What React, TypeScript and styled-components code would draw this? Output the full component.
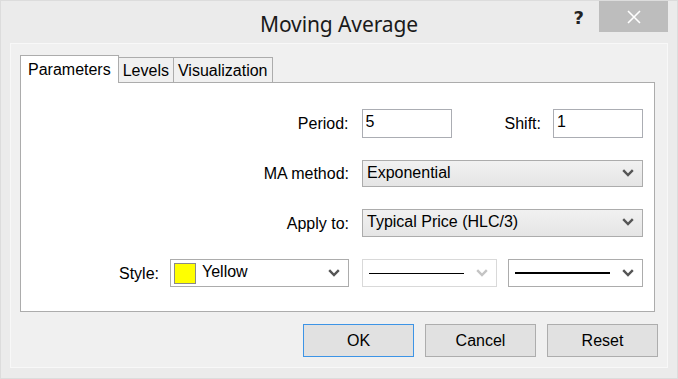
import styled, { createGlobalStyle } from "styled-components";

const GlobalStyle = createGlobalStyle`
  html, body {
    margin: 0;
    padding: 0;
    background: #ebebeb;
  }
  * {
    box-sizing: border-box;
  }
`;

const Chevron = ({ color = "#555" }: { color?: string }) => (
  <svg width="12" height="8" viewBox="0 0 12 8">
    <path d="M1.2 1.2 L6 6 L10.8 1.2" fill="none" stroke={color} strokeWidth="2.4" />
  </svg>
);

const App: React.FC = () => {
  return (
    <>
      <GlobalStyle />
      <Window>
        <TitleBar>
          <span />
          <Title>Moving Average</Title>
          <Controls>
            <Help>?</Help>
            <Close>
              <svg width="14" height="14" viewBox="0 0 14 14">
                <path d="M1 1 L13 13 M13 1 L1 13" stroke="#fff" strokeWidth="1.6" />
              </svg>
            </Close>
          </Controls>
        </TitleBar>
        <Client>
          <TabStrip>
            <Tab $active>Parameters</Tab>
            <Tab>Levels</Tab>
            <Tab>Visualization</Tab>
          </TabStrip>
          <Panel>
            <Rows>
              <Row $h={29}>
                <Label $gap={13}>Period:</Label>
                <Field $w={90} readOnly value="5" />
                <Label $gap={12} $left={53}>Shift:</Label>
                <Field $w={90} readOnly value="1" />
              </Row>
              <Row $h={27}>
                <Label $gap={13}>MA method:</Label>
                <Select $w={281}>
                  <span>Exponential</span>
                  <Chevron />
                </Select>
              </Row>
              <Row $h={28}>
                <Label $gap={13}>Apply to:</Label>
                <Select $w={281}>
                  <span>Typical Price (HLC/3)</span>
                  <Chevron />
                </Select>
              </Row>
              <Row $h={28}>
                <Label $gap={11}>Style:</Label>
                <ColorSelect>
                  <Swatch $color="#ffff00" />
                  <ColorName>Yellow</ColorName>
                  <Chevron />
                </ColorSelect>
                <LineSelect $disabled $left={13}>
                  <LineSample $thick={1} />
                  <Chevron color="#c4c4c4" />
                </LineSelect>
                <LineSelect $left={11}>
                  <LineSample $thick={2} />
                  <Chevron />
                </LineSelect>
              </Row>
            </Rows>
          </Panel>
          <ButtonRow>
            <Button $default>OK</Button>
            <Button>Cancel</Button>
            <Button>Reset</Button>
          </ButtonRow>
        </Client>
      </Window>
    </>
  );
};

export default App;

const Window = styled.div`
  width: 678px;
  height: 379px;
  border: 1px solid #dcdcdc;
  background: #ebebeb;
  display: flex;
  flex-direction: column;
  font-family: "Liberation Sans", Arial, sans-serif;
  color: #000;
`;

const TitleBar = styled.div`
  height: 42px;
  display: grid;
  grid-template-columns: 1fr auto 1fr;
  align-items: start;
`;

const Title = styled.div`
  font-family: "Noto Sans", "Open Sans", sans-serif;
  font-size: 21px;
  color: #1a1a1a;
  line-height: 42px;
  padding-top: 2px;
  letter-spacing: -0.1px;
`;

const Controls = styled.div`
  justify-self: end;
  display: flex;
  align-items: flex-start;
  margin-right: 9px;
`;

const Help = styled.div`
  font-family: "DejaVu Sans", sans-serif;
  font-weight: bold;
  font-size: 18px;
  color: #222;
  margin-top: 6px;
  margin-right: 15px;
`;

const Close = styled.div`
  width: 69px;
  height: 31px;
  background: #bdbdbd;
  display: flex;
  align-items: center;
  justify-content: center;
`;

const Client = styled.div`
  flex: 1;
  margin: 0 9px 10px 9px;
  border: 1px solid #f8f8f8;
  background: #f0f0f0;
  padding: 11px 9px 10px 9px;
  display: flex;
  flex-direction: column;
`;

const TabStrip = styled.div`
  display: flex;
  align-items: flex-end;
  height: 27px;
`;

const Tab = styled.div<{ $active?: boolean }>`
  position: relative;
  z-index: ${(p) => (p.$active ? 1 : 0)};
  height: ${(p) => (p.$active ? "28px" : "25px")};
  margin-bottom: ${(p) => (p.$active ? "-1px" : "0")};
  padding: ${(p) => (p.$active ? "2px 7px 0 7px" : "1px 4px 0 4px")};
  margin-left: ${(p) => (p.$active ? "0" : "-1px")};
  border: 1px solid #acacac;
  border-bottom: none;
  background: ${(p) => (p.$active ? "#fff" : "#f0f0f0")};
  font-size: 16px;
  line-height: 24px;
  white-space: nowrap;
  &:first-child {
    margin-left: 0;
  }
`;

const Panel = styled.div`
  height: 230px;
  margin-right: 3px;
  background: #fff;
  border: 1px solid #acacac;
  padding: 26px 11px 0 0;
`;

const Rows = styled.div`
  display: flex;
  flex-direction: column;
  gap: 22px;
`;

const Row = styled.div<{ $h: number }>`
  height: ${(p) => p.$h}px;
  display: flex;
  justify-content: flex-end;
  align-items: stretch;
`;

const Label = styled.div<{ $gap: number; $left?: number }>`
  font-size: 16px;
  display: flex;
  align-items: center;
  margin-right: ${(p) => p.$gap}px;
  margin-left: ${(p) => p.$left ?? 0}px;
  padding-top: 1px;
`;

const Field = styled.input<{ $w: number }>`
  width: ${(p) => p.$w}px;
  height: 100%;
  border: 1px solid #abadb3;
  background: #fff;
  font-family: "Liberation Sans", Arial, sans-serif;
  font-size: 16px;
  color: #000;
  padding: 0 0 4px 3px;
  margin: 0;
  outline: none;
`;

const Select = styled.div<{ $w: number }>`
  width: ${(p) => p.$w}px;
  border: 1px solid #acacac;
  background: linear-gradient(#f1f1f1, #e5e5e5);
  display: flex;
  align-items: center;
  justify-content: space-between;
  padding: 0 8px 2px 4px;
  font-size: 16px;
`;

const ColorSelect = styled.div`
  width: 179px;
  border: 1px solid #acacac;
  background: #fff;
  display: flex;
  align-items: center;
  padding: 0 8px 0 3px;
  font-size: 16px;
`;

const Swatch = styled.div<{ $color: string }>`
  width: 22px;
  height: 21px;
  background: ${(p) => p.$color};
  border: 1px solid #8a8a8a;
`;

const ColorName = styled.span`
  flex: 1;
  margin-left: 6px;
  padding-bottom: 2px;
`;

const LineSelect = styled.div<{ $disabled?: boolean; $left: number }>`
  width: 135px;
  margin-left: ${(p) => p.$left}px;
  border: 1px solid ${(p) => (p.$disabled ? "#d9d9d9" : "#acacac")};
  background: #fff;
  display: flex;
  align-items: center;
  justify-content: space-between;
  padding: 0 8px 0 6px;
`;

const LineSample = styled.div<{ $thick: number }>`
  width: 95px;
  height: ${(p) => p.$thick}px;
  background: #000;
`;

const ButtonRow = styled.div`
  margin-top: 12px;
  display: flex;
  justify-content: flex-end;
  gap: 11px;
`;

const Button = styled.div<{ $default?: boolean }>`
  width: 111px;
  height: 33px;
  border: 1px solid ${(p) => (p.$default ? "#3d94e6" : "#adadad")};
  background: #e1e1e1;
  display: flex;
  align-items: center;
  justify-content: center;
  font-size: 16px;
`;
